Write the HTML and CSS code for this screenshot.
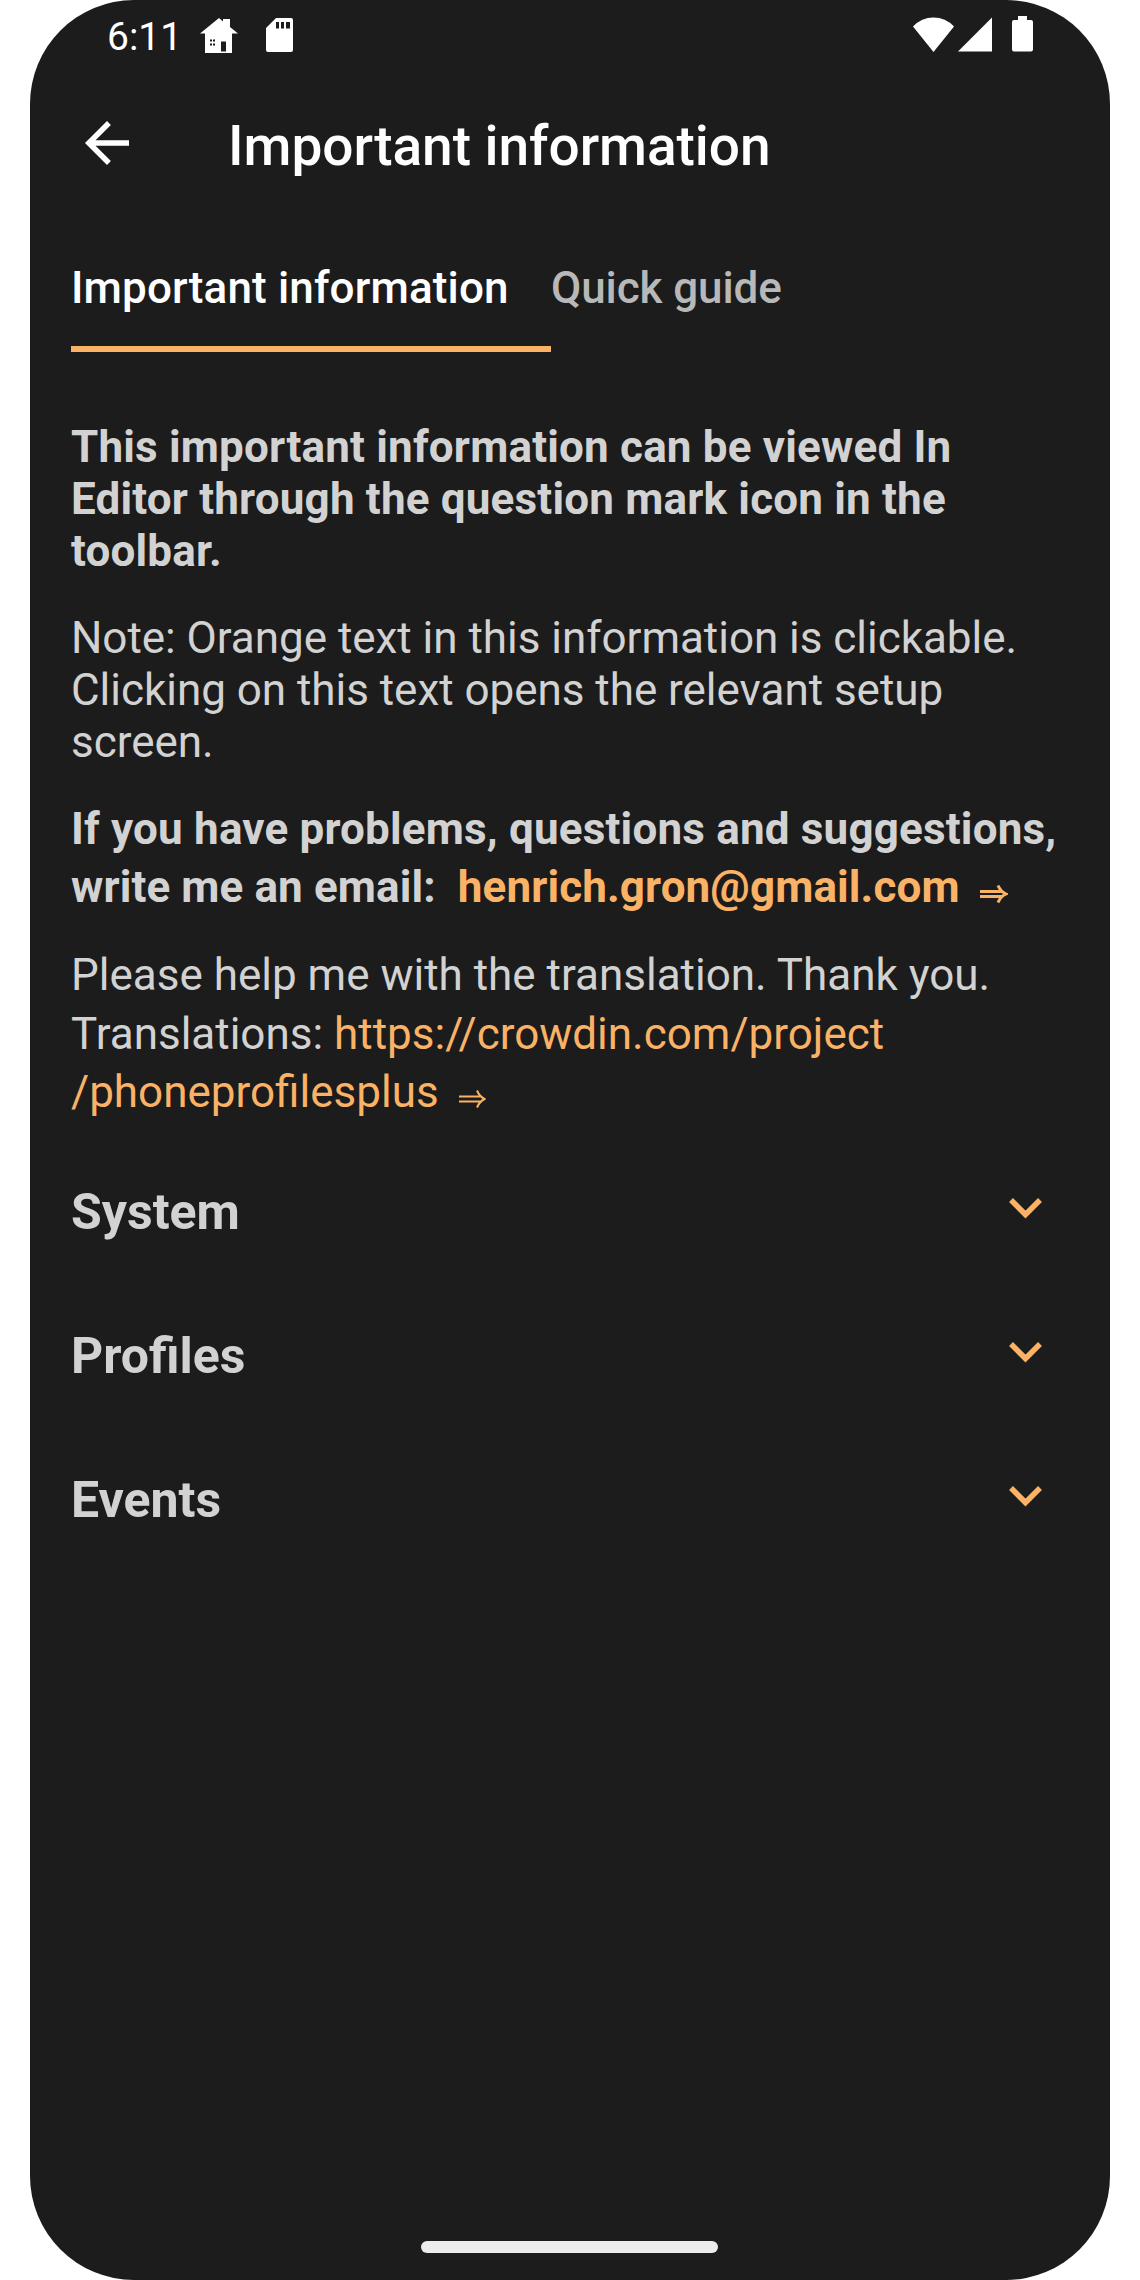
FILE: index.html
```html
<!DOCTYPE html>
<html lang="en">
  <head>
    <meta charset="UTF-8" />
    <meta name="viewport" content="width=device-width, initial-scale=1.0" />
    <title>Important information</title>
    <link rel="stylesheet" href="styles.css" />
  </head>
  <body>
    <div class="phone">
      <div class="status-bar">
        <span class="clock">6:11</span>
        <svg class="icon-home" width="38" height="36" viewBox="0 0 38 36" fill="#fff">
          <path d="M0 15.500 19 0l4 3.500V1h7v8l8 6.500z" />
          <path fill-rule="evenodd" d="M5 15h27v20H5zM21 23.500v10h5v-10z" />
          <path fill="#1c1c1c" d="M10 21.500h2v2h-2zM13 21.500h2v2h-2zM10 25.500h2v2h-2zM13 25.500h2v2h-2z" />
        </svg>
        <svg class="icon-sd" width="27" height="34" viewBox="0 0 27 34" fill="#fff">
          <path fill-rule="evenodd" d="M10 0h15a2 2 0 0 1 2 2v30a2 2 0 0 1-2 2H2a2 2 0 0 1-2-2V10zM10 4v6.500h3V4zM15 4v6.500h3V4zM20 4v6.500h4V4z" />
        </svg>
        <div class="status-right">
          <svg class="icon-wifi" width="41" height="35" viewBox="0 0 41 35" fill="#fff">
            <path d="M0 9.500Q8.500.5 20.500.5T41 9.500L20.500 35z" />
          </svg>
          <svg class="icon-signal" width="34" height="35" viewBox="0 0 34 35" fill="#fff">
            <path d="M34 .5v34H0z" />
          </svg>
          <svg class="icon-battery" width="21" height="36" viewBox="0 0 21 36" fill="#fff">
            <path d="M6 0h9v4h4a2 2 0 0 1 2 2v27.500a2 2 0 0 1-2 2H2a2 2 0 0 1-2-2V6a2 2 0 0 1 2-2h4z" />
          </svg>
        </div>
      </div>

      <header class="toolbar">
        <svg class="back" width="44" height="44" viewBox="4 4 16 16" fill="#fff">
          <path d="M20 11H7.830l5.590-5.590L12 4l-8 8 8 8 1.410-1.410L7.830 13H20v-2z" />
        </svg>
        <h1>Important information</h1>
      </header>

      <nav class="tabs">
        <a class="tab active">Important information</a>
        <a class="tab">Quick guide</a>
      </nav>

      <main class="content">
        <p><b>This important information can be viewed In Editor through the question mark icon in the toolbar.</b></p>
        <p class="note">Note: Orange text in this information is clickable. Clicking on this text opens the relevant setup screen.</p>
        <p class="email">
          <b>If you have problems, questions and suggestions,</b>
          <b class="link-line">write me an email:&nbsp; <a>henrich.gron@gmail.com<svg class="arrow" width="28" height="18" viewBox="0 0 28 18"><path d="M0 6.500h23M0 11.500h23M18 .5q2.500 6 8 8.500-5.500 2.500-8 8.500" stroke-width="3" /></svg></a></b>
        </p>
        <p>
          Please help me with the translation. Thank you.
          <span class="link-line">Translations: <a>https://crowdin.com/project</a></span>
          <span class="link-line"><a>/phoneprofilesplus<svg class="arrow" width="27" height="18" viewBox="0 0 27 18"><path d="M0 6.500h22.500M0 11.500h22.500M18 .5q2.500 6 7.500 8.500-5 2.500-7.500 8.500" stroke-width="2" /></svg></a></span>
        </p>

        <section class="group">
          <h2>System</h2>
          <svg class="chevron" width="33" height="21" viewBox="0 0 33 21"><path d="m2 2 14.500 14.500L31 2" /></svg>
        </section>
        <section class="group">
          <h2>Profiles</h2>
          <svg class="chevron" width="33" height="21" viewBox="0 0 33 21"><path d="m2 2 14.500 14.500L31 2" /></svg>
        </section>
        <section class="group">
          <h2>Events</h2>
          <svg class="chevron" width="33" height="21" viewBox="0 0 33 21"><path d="m2 2 14.500 14.500L31 2" /></svg>
        </section>
      </main>

      <div class="nav-handle"></div>
    </div>
  </body>
</html>
```
FILE: styles.css
```css
* {
  box-sizing: border-box;
}

body {
  margin: 0;
  background: #fff;
  font-family: Roboto, sans-serif;
  font-size: 44px;
  line-height: 52px;
  color: #d2d2d2;
}

h1,
h2,
p {
  margin: 0;
}

svg {
  display: block;
  flex: none;
}

.phone {
  display: flex;
  flex-direction: column;
  width: 1080px;
  height: 2280px;
  margin: 0 auto;
  border-radius: 104px;
  background: #1c1c1c;
  overflow: hidden;
}

/* status bar */
.status-bar {
  display: flex;
  align-items: flex-start;
  height: 72px;
  padding: 0 77px;
  color: #fff;
}

.clock {
  width: 93px;
  padding-top: 12px;
  font-size: 39px;
  line-height: 50px;
}

.icon-home {
  margin-top: 18px;
}

.icon-sd {
  margin: 18px 0 0 28px;
}

.status-right {
  display: flex;
  margin-left: auto;
}

.icon-wifi {
  margin-top: 17px;
}

.icon-signal {
  margin: 17px 0 0 4px;
}

.icon-battery {
  margin: 16px 0 0 20px;
}

/* toolbar */
.toolbar {
  display: flex;
  align-items: center;
  height: 144px;
  padding: 0 55px;
}

.back {
  margin-top: -2px;
}

.toolbar h1 {
  margin-left: 99px;
  padding-top: 3px;
  font-size: 55px;
  font-weight: 500;
  line-height: 64px;
  letter-spacing: -0.04px;
}

.toolbar h1,
.tab.active {
  color: #fff;
}

/* tabs */
.tabs {
  display: flex;
  padding: 46px 41px 0;
}

.tab {
  height: 90px;
  font-weight: 500;
  letter-spacing: -0.1px;
  color: #b8b8b8;
}

.tab.active {
  width: 480px;
  border-bottom: 6px solid #f9b266;
  letter-spacing: 0.14px;
}

/* content */
.content {
  flex: 1;
  padding: 69px 41px 0;
}

.content p {
  margin-bottom: 35px;
}

.content .email {
  margin-bottom: 36px;
}

.content b {
  letter-spacing: 0.18px;
}

.content .note {
  letter-spacing: -0.03px;
}

.content a {
  color: #f9b266;
}

.link-line {
  display: block;
  padding-top: 6px;
}

.link-line:first-child {
  padding-top: 7px;
}

.content b.link-line {
  letter-spacing: 0.11px;
}

.arrow {
  display: inline-block;
  margin-left: 20px;
  vertical-align: -1px;
  fill: none;
  stroke: #f9b266;
}

.group {
  display: flex;
  justify-content: space-between;
  height: 144px;
  padding: 29px 27.500px 0 0;
}

.group h2 {
  font-size: 50px;
  font-weight: 700;
  line-height: 60px;
}

.chevron {
  margin-top: 15.500px;
  fill: none;
  stroke: #f9b266;
  stroke-width: 5.500;
}

/* gesture handle */
.nav-handle {
  width: 297px;
  height: 12px;
  margin: 0 391px 27px;
  border-radius: 6px;
  background: #ececec;
}
```
